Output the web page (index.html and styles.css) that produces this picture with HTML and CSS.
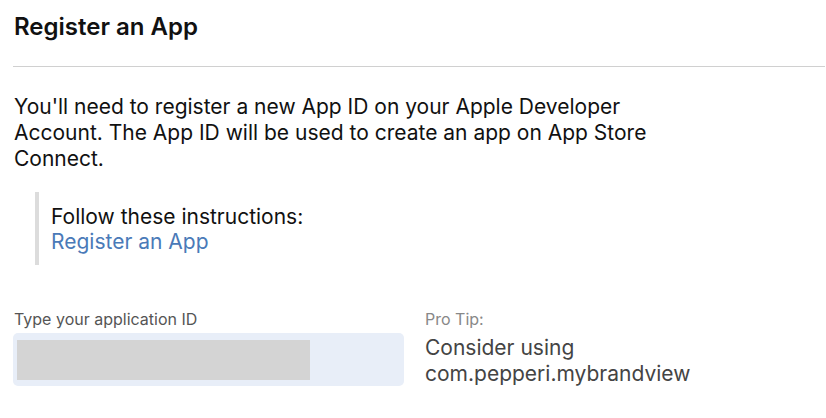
FILE: index.html
```html
<!DOCTYPE html>
<html>
<head>
<meta charset="utf-8">
<link rel="stylesheet" href="styles.css">
</head>
<body>
<div class="page">
  <h1 class="title">Register an App</h1>
  <hr class="divider">
  <p class="intro">You'll need to register a new App ID on your Apple Developer Account. The App ID will be used to create an app on App Store Connect.</p>
  <div class="quote">
    <div>Follow these instructions:</div>
    <a class="link" href="#">Register an App</a>
  </div>
  <div class="fields">
    <div class="field">
      <div class="label">Type your application ID</div>
      <div class="input"><div class="input-fill"></div></div>
    </div>
    <div class="tip">
      <div class="tip-label">Pro Tip:</div>
      <div class="tip-text">Consider using com.pepperi.mybrandview</div>
    </div>
  </div>
</div>
</body>
</html>
```
FILE: styles.css
```css
html, body {
  margin: 0;
  padding: 0;
  background: #fff;
}
body {
  font-family: Inter, "Noto Sans", sans-serif;
  color: #111;
}
.page {
  padding: 0 0 0 13px;
  width: 812px;
}
.title {
  margin: 0;
  padding: 12px 0 0 1px;
  height: 66px;
  box-sizing: border-box;
  font-size: 24px;
  line-height: 30px;
  font-weight: 600;
  color: #111;
}
.divider {
  margin: 0;
  border: 0;
  height: 1px;
  background: #d0d0d0;
}
.intro {
  margin: 27px 0 0 1px;
  width: 650px;
  font-size: 21px;
  line-height: 26px;
  color: #111;
}
.quote {
  margin: 20px 0 0 22px;
  padding: 12px 0 11px 12px;
  border-left: 4px solid #dcdcdc;
  font-size: 21px;
  line-height: 25px;
  color: #111;
}
.link {
  color: #4a7ab8;
  text-decoration: none;
}
.fields {
  margin-top: 45px;
  display: grid;
  grid-template-columns: 391px 1fr;
  column-gap: 21px;
}
.label {
  font-size: 16px;
  line-height: 18px;
  color: #555;
  padding-left: 1px;
}
.input {
  margin-top: 5px;
  height: 53px;
  box-sizing: border-box;
  background: #e8eef8;
  border-radius: 5px;
  padding: 7px 0 0 4px;
}
.input-fill {
  width: 293px;
  height: 40px;
  background: #d4d4d4;
}
.tip-label {
  font-size: 16px;
  line-height: 18px;
  color: #888;
}
.tip-text {
  margin-top: 7px;
  width: 300px;
  font-size: 21px;
  line-height: 26px;
  color: #444;
}
```
